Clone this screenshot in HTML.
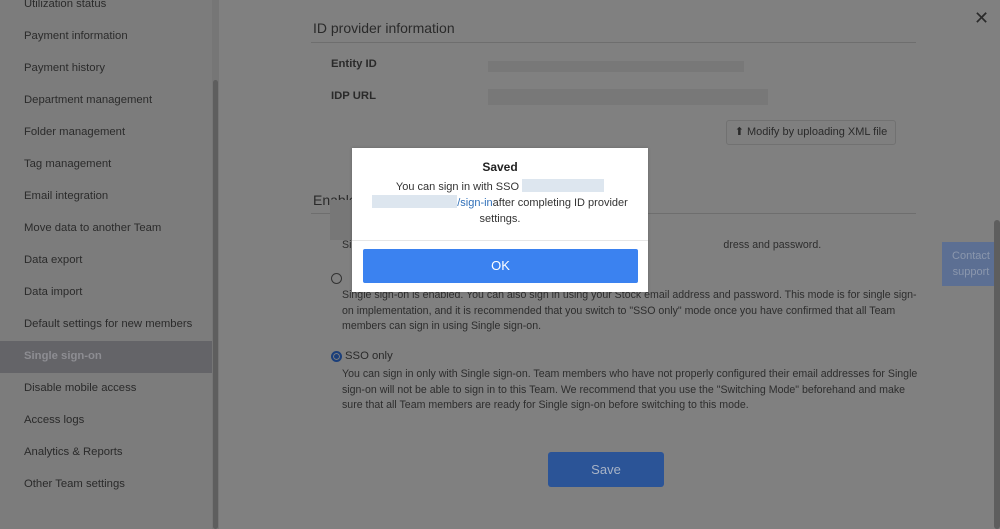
<!DOCTYPE html>
<html><head><style>
body{margin:0;width:1000px;height:529px;overflow:hidden;background:#808080;font-family:"Liberation Sans",sans-serif;position:relative}
.sb{position:absolute;left:0;top:0;width:212px;height:529px;background:#7c7c7c}
.sb div{position:absolute;left:24px;font-size:11.3px;color:#2b2b2b}
.sel{position:absolute;left:0;top:341px;width:212px;height:32px;background:#646468}
.sbar{position:absolute;left:212px;top:0;width:7px;height:529px;background:#767676}
.thumb{position:absolute;left:213px;top:80px;width:5px;height:449px;background:#5e5e5e;border-radius:3px}
.t{position:absolute;color:#2a2a2a;font-size:11.3px}
.blur{position:absolute;background:#777;opacity:.9}
.p{position:absolute;left:342px;font-size:10.6px;line-height:15.5px;color:#2d2d2d;width:578px}
</style></head><body>
<div class="sb">
<div style="top:-2px">Utilization status</div>
<div style="top:30px">Payment information</div>
<div style="top:62px">Payment history</div>
<div style="top:94px">Department management</div>
<div style="top:126px">Folder management</div>
<div style="top:158px">Tag management</div>
<div style="top:190px">Email integration</div>
<div style="top:222px">Move data to another Team</div>
<div style="top:254px">Data export</div>
<div style="top:286px">Data import</div>
<div style="top:318px">Default settings for new members</div>
</div>
<div class="sel"></div>
<div class="t" style="left:24px;top:350px;color:#8d8d92;font-weight:bold">Single sign-on</div>
<div class="t" style="left:24px;top:382px">Disable mobile access</div>
<div class="t" style="left:24px;top:414px">Access logs</div>
<div class="t" style="left:24px;top:446px">Analytics &amp; Reports</div>
<div class="t" style="left:24px;top:478px">Other Team settings</div>
<div class="sbar"></div><div class="thumb"></div>
<div class="t" style="left:313px;top:20px;font-size:14px">ID provider information</div>
<div style="position:absolute;left:311px;top:42px;width:605px;height:1px;background:#6e6e6e"></div>
<div class="t" style="left:331px;top:58px;font-weight:bold">Entity ID</div>
<div class="t" style="left:331px;top:90px;font-weight:bold">IDP URL</div>
<div class="blur" style="left:488px;top:61px;width:256px;height:11px"></div>
<div class="blur" style="left:488px;top:89px;width:280px;height:16px"></div>
<div style="position:absolute;left:726px;top:120px;width:170px;height:25px;border:1px solid #717171;border-radius:3px;background:#7f7f7f;box-sizing:border-box;font-size:11px;color:#2a2a2a;line-height:23px;text-align:center">⬆ Modify by uploading XML file</div>
<div class="t" style="left:313px;top:192px;font-size:14px">Enable</div>
<div style="position:absolute;left:311px;top:213px;width:605px;height:1px;background:#6e6e6e"></div>
<div class="p" style="top:238px;left:342px">Si<span style="margin-left:372px">dress and password.</span></div>
<div style="position:absolute;left:331px;top:273px;width:9px;height:9px;border:1px solid #333;border-radius:50%;background:#808080"></div>
<div class="p" style="top:288px">Single sign-on is enabled. You can also sign in using your Stock email address and password. This mode is for single sign-on implementation, and it is recommended that you switch to "SSO only" mode once you have confirmed that all Team members can sign in using Single sign-on.</div>
<div style="position:absolute;left:331px;top:351px;width:7px;height:7px;border:2px solid #1b3f7a;border-radius:50%;background:#1b3f7a;box-shadow:inset 0 0 0 1px #808080"></div>
<div class="t" style="left:345px;top:350px">SSO only</div>
<div class="p" style="top:367px">You can sign in only with Single sign-on. Team members who have not properly configured their email addresses for Single sign-on will not be able to sign in to this Team. We recommend that you use the "Switching Mode" beforehand and make sure that all Team members are ready for Single sign-on before switching to this mode.</div>
<div style="position:absolute;left:548px;top:452px;width:116px;height:35px;background:#2b5497;border-radius:3px;color:#a8b3c6;font-size:13px;line-height:35px;text-align:center">Save</div>
<div style="position:absolute;left:974px;top:8px;font-size:18px;color:#2a2a2a">✕</div>
<div style="position:absolute;left:942px;top:242px;width:58px;height:44px;background:#5c6f93;color:#8b97ad;font-size:11px;line-height:16px;text-align:center;padding-top:6px;box-sizing:border-box">Contact<br>support</div>
<div style="position:absolute;left:994px;top:220px;width:6px;height:309px;background:#5e5e5e;border-radius:3px"></div>
<div style="position:absolute;left:330px;top:200px;width:22px;height:40px;background:#777"></div>
<div style="position:absolute;left:352px;top:148px;width:296px;height:144px;background:#fff;box-shadow:0 0 3px rgba(0,0,0,.2)">
<div style="text-align:center;font-weight:bold;font-size:12px;color:#222;margin-top:12px">Saved</div>
<div style="text-align:center;font-size:11px;color:#333;line-height:16px;margin:5px 20px 0">You can sign in with SSO <span style="display:inline-block;width:82px;height:13px;background:#dde6ef;vertical-align:-2px"></span><br><span style="display:inline-block;width:85px;height:13px;background:#dde6ef;vertical-align:-2px"></span><span style="color:#2f6fb8">/sign-in</span>after completing ID provider settings.</div>
<div style="position:absolute;left:0;top:92px;width:296px;height:1px;background:#e6e6e6"></div>
<div style="position:absolute;left:11px;top:101px;width:275px;height:34px;background:#3b82f0;border-radius:2px;color:#fff;font-size:13px;line-height:34px;text-align:center">OK</div>
</div>
</body></html>
